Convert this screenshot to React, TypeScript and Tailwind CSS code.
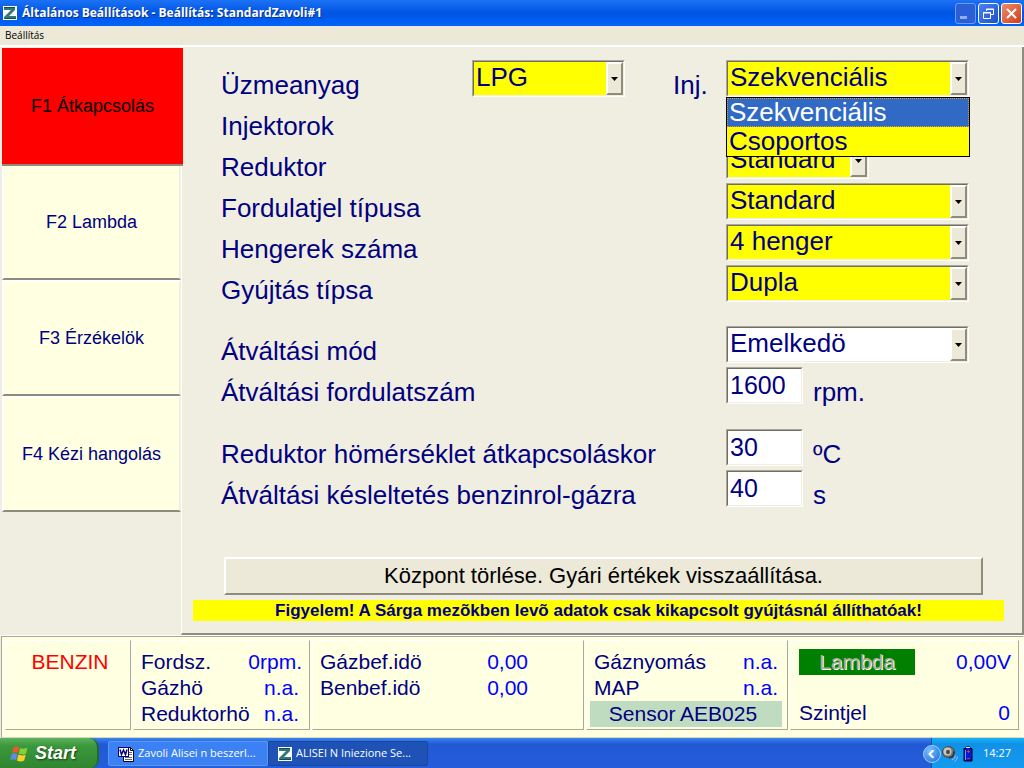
import { useState } from 'react'
import type { ReactNode } from 'react'
import clsx from 'clsx'

const tabs = ['F1 Átkapcsolás', 'F2 Lambda', 'F3 Érzékelök', 'F4 Kézi hangolás']

const sunken = 'border border-t-[#aca899] border-l-[#aca899] border-r-white border-b-white'
const sunkenInner = 'border border-t-[#716f64] border-l-[#716f64] border-r-[#f1efe2] border-b-[#f1efe2]'

function ZLogo() {
  return (
    <svg className="w-[14px] h-[14px] shrink-0" viewBox="0 0 14 14" aria-hidden="true">
      <rect width="14" height="14" fill="#fff" />
      <path d="M1 1h11v3L6 10h7v3H1v-2l7-7H1z" fill="#2f7a74" />
      <path d="M1 1.500h11M2 12.500h11" stroke="#1a4a48" fill="none" />
    </svg>
  )
}

function WindowsFlag() {
  return (
    <svg className="w-[19px] h-[18px] shrink-0" viewBox="0 0 19 18" aria-hidden="true">
      <path d="M3.500 2.500C5.500 1 7.500 1.200 9.200 2.200L7.700 8C6 7 4 7 2 8.200z" fill="#f2572a" />
      <path d="M10.200 2.900C12.500 4 14.500 4 17.500 2.500L16 8.500C13.500 9.900 11 9.600 8.700 8.600z" fill="#84cf3a" />
      <path d="M1.700 9.200C3.700 8 5.700 8 7.400 9L6 15C4 13.900 2 14 .2 15.200z" fill="#5b8df0" />
      <path d="M8.400 9.600C10.700 10.600 13 10.700 15.700 9.500L14.200 15.500C11.500 17 9 16.500 6.900 15.500z" fill="#fbd128" />
    </svg>
  )
}

function WordIcon() {
  return (
    <svg className="w-4 h-4 shrink-0" viewBox="0 0 16 16" aria-hidden="true">
      <path d="M5.500 1.500h7l3 3v11h-10z" fill="#fff" stroke="#000" />
      <path d="M12.500 1.500v3h3" fill="none" stroke="#000" />
      <path d="M11 6.500h3M11 8.500h3M7 11.500h7M7 13.500h7" stroke="#666" />
      <rect x=".5" y="1.500" width="10" height="9" fill="#fff" stroke="#000080" />
      <path d="M2 3.500l1.500 5 2-4.500 2 4.500 1.500-5" fill="none" stroke="#000080" strokeWidth="1.500" />
    </svg>
  )
}

function SpeakerIcon() {
  return (
    <svg className="w-4 h-4 shrink-0" viewBox="0 0 16 16" aria-hidden="true">
      <ellipse cx="6.500" cy="6" rx="6" ry="5.500" fill="#77756f" stroke="#4a4842" />
      <ellipse cx="5.500" cy="5.500" rx="4" ry="4" fill="#c9c7c0" />
      <ellipse cx="6" cy="6" rx="2" ry="2.300" fill="#4a4a4a" />
      <path d="M7 12l4-1.500 1-5" fill="none" stroke="#333" strokeWidth="1.500" />
      <path d="M10 14q3-1 3.500-4.500M12.500 15.500q2.500-1 3-5" fill="none" stroke="#a9b8ff" />
    </svg>
  )
}

function BatteryIcon() {
  return (
    <svg className="w-[10px] h-[16px] shrink-0" viewBox="0 0 10 16" aria-hidden="true">
      <path d="M3 1h4v1.500h2V15H1V2.500h2z" fill="#0018e0" stroke="#000" />
      <path d="M3 1.500h4" stroke="#e8e8e8" />
      <path d="M2.500 4v10" stroke="#4ca0ff" />
      <path d="M4 5.500h3M5.500 4v3M4 12.500h3" stroke="#f22" />
    </svg>
  )
}

function TitleBar() {
  const btn = 'flex items-center justify-center w-[21px] h-[21px] rounded-[3px] border'
  return (
    <header className="flex items-center h-[26px] pl-[3px] pr-[2px] bg-linear-to-b from-[#1c72f5] via-[#0054e3] to-[#0064fb]">
      <ZLogo />
      <h1 className="flex-1 ml-[5px] font-['Open_Sans','Noto_Sans',sans-serif] font-bold text-[12px] leading-[26px] text-white whitespace-nowrap [text-shadow:1px_1px_#0a2f8c]">
        Általános Beállítások - Beállítás: StandardZavoli#1
      </h1>
      <div className="flex gap-[2px]">
        <button aria-label="Kis méret" className={clsx(btn, 'border-[#6f9bf0] bg-[#2a5fd8]')}>
          <svg className="w-[13px] h-[13px]" viewBox="0 0 13 13"><path d="M1 9h7v3H1z" fill="#93aeee" /></svg>
        </button>
        <button aria-label="Előző méret" className={clsx(btn, 'border-white bg-linear-to-br from-[#4a82f0] to-[#1c4fc8]')}>
          <svg className="w-[13px] h-[13px]" viewBox="0 0 13 13" fill="none" stroke="#fff">
            <path d="M4.500 4V2.500h7v5H9M4 2h8M1.500 5.500h7v6h-7zM1 6h8" />
          </svg>
        </button>
        <button aria-label="Bezárás" className={clsx(btn, 'border-white bg-linear-to-br from-[#ee8a68] to-[#d03a12]')}>
          <svg className="w-[13px] h-[13px]" viewBox="0 0 13 13"><path d="M2 2l9 9M11 2l-9 9" stroke="#fff" strokeWidth="2" /></svg>
        </button>
      </div>
    </header>
  )
}

type ComboProps = {
  id: string
  value: string
  className: string
  white?: boolean
  children?: ReactNode
}

function Combo({ id, value, className, white, children }: ComboProps) {
  return (
    <div className={clsx('relative h-[37px]', sunken, className)}>
      <select
        id={id}
        defaultValue={value}
        className={clsx(
          'block appearance-none w-full h-full pl-[2px] pr-5 pb-[2px] leading-[31px] outline-none',
          sunkenInner,
          white ? 'bg-white' : 'bg-[#ffff00]'
        )}
      >
        <option>{value}</option>
      </select>
      <span className="absolute top-px right-px bottom-px w-[17px] flex items-center justify-center pointer-events-none bg-[#ece9d8] border-2 border-t-white border-l-white border-r-[#8f8c7e] border-b-[#8f8c7e]">
        <svg className="w-[7px] h-1 shrink-0" viewBox="0 0 7 4"><path d="M0 0h7L3.500 4z" fill="#000" /></svg>
      </span>
      {children}
    </div>
  )
}

function Row({ id, label, children }: { id?: string; label: string; children?: ReactNode }) {
  return (
    <div className="flex h-[41px]">
      <label htmlFor={id} className="w-[505px] shrink-0 pt-[10px] leading-[31px] whitespace-nowrap">
        {label}
      </label>
      {children}
    </div>
  )
}

function NumberRow({ id, label, value, unit }: { id: string; label: string; value: string; unit: string }) {
  return (
    <Row id={id} label={label}>
      <div className={clsx('w-[77px] h-[37px]', sunken)}>
        <input id={id} defaultValue={value} className={clsx('block w-full h-full pl-[2px] bg-white text-[25px] outline-none', sunkenInner)} />
      </div>
      <span className="ml-[10px] pt-[10px] leading-[31px]">{unit}</span>
    </Row>
  )
}

function SettingsForm() {
  return (
    <form className="pt-[13px] pl-[39px] text-[26px]" onSubmit={(e) => e.preventDefault()}>
      <div className="flex h-[41px]">
        <label htmlFor="fuel" className="w-[251px] shrink-0 pt-[10px] leading-[31px]">Üzmeanyag</label>
        <Combo id="fuel" value="LPG" className="w-[153px]" />
        <label htmlFor="inj" className="w-[101px] shrink-0 pl-12 pt-[10px] leading-[31px]">Inj.</label>
        <Combo id="inj" value="Szekvenciális" className="w-[243px]">
          <ul role="listbox" className="absolute z-10 top-9 -left-px w-[244px] border border-black bg-[#ffff00]">
            <li role="option" aria-selected="true" className="h-[29px] pl-px bg-[#316ac5] text-white border border-dotted border-[#e09a3a] leading-[27px]">
              Szekvenciális
            </li>
            <li role="option" aria-selected="false" className="h-[29px] pl-[2px] leading-[29px]">Csoportos</li>
          </ul>
        </Combo>
      </div>
      <Row label="Injektorok" />
      <Row id="reducer" label="Reduktor">
        <Combo id="reducer" value="Standard" className="w-[143px]" />
      </Row>
      <Row id="rpmtype" label="Fordulatjel típusa">
        <Combo id="rpmtype" value="Standard" className="w-[243px]" />
      </Row>
      <Row id="cylinders" label="Hengerek száma">
        <Combo id="cylinders" value="4 henger" className="w-[243px]" />
      </Row>
      <Row id="ignition" label="Gyújtás típsa">
        <Combo id="ignition" value="Dupla" className="w-[243px]" />
      </Row>
      <div className="mt-5">
        <Row id="mode" label="Átváltási mód">
          <Combo id="mode" value="Emelkedö" className="w-[243px]" white />
        </Row>
        <NumberRow id="rpm" label="Átváltási fordulatszám" value="1600" unit="rpm." />
      </div>
      <div className="mt-[21px]">
        <NumberRow id="temp" label="Reduktor hömérséklet átkapcsoláskor" value="30" unit="ºC" />
        <NumberRow id="delay" label="Átváltási késleltetés benzinrol-gázra" value="40" unit="s" />
      </div>
    </form>
  )
}

function StatusPanel({ className, children }: { className?: string; children: ReactNode }) {
  return (
    <section className={clsx('h-[90px] pt-2 border border-t-white border-l-white border-r-[#aca899] border-b-[#aca899]', className)}>
      {children}
    </section>
  )
}

function Reading({ label, value, className }: { label: string; value: string; className?: string }) {
  return (
    <div className="flex justify-between whitespace-nowrap">
      <span>{label}</span>
      <span className={clsx('text-[#0000ff]', className)}>{value}</span>
    </div>
  )
}

function StatusBar() {
  return (
    <footer className="border-t border-white pl-px">
      <div className="grid grid-cols-[126fr_177fr_272fr_202fr_229fr] gap-x-[2px] pl-[3px] pr-1 pt-[3px] pb-[7px] bg-[#ffffe1] border border-t-[#aca899] border-l-[#aca899] border-r-white border-b-[#d8d5c0] text-[21px] leading-[26px]">
        <StatusPanel className="text-center text-[#ff0000] pl-1">BENZIN</StatusPanel>
        <StatusPanel className="pl-[7px]">
          <Reading label="Fordsz." value="0rpm." className="pr-[7px]" />
          <Reading label="Gázhö" value="n.a." className="pr-[10px]" />
          <Reading label="Reduktorhö" value="n.a." className="pr-[10px]" />
        </StatusPanel>
        <StatusPanel className="pl-[7px] pr-[55px]">
          <Reading label="Gázbef.idö" value="0,00" />
          <Reading label="Benbef.idö" value="0,00" />
        </StatusPanel>
        <StatusPanel className="pl-[7px] pr-[9px]">
          <Reading label="Gáznyomás" value="n.a." />
          <Reading label="MAP" value="n.a." />
          <div className="-mx-1 pr-[6px] bg-[#c0dcc0] text-center">Sensor AEB025</div>
        </StatusPanel>
        <StatusPanel className="pl-2 pr-[7px]">
          <div className="flex justify-between mb-[25px]">
            <button disabled className="w-[116px] h-[26px] bg-[#008000] text-[#aca899] [text-shadow:1px_1px_#fff]">Lambda</button>
            <span className="text-[#0000ff]">0,00V</span>
          </div>
          <Reading label="Szintjel" value="0" className="pr-px" />
        </StatusPanel>
      </div>
    </footer>
  )
}

function Taskbar() {
  const task = "flex items-center gap-1 w-[160px] h-[25px] pl-[9px] rounded-[2px] text-[11px] text-white whitespace-nowrap font-['Open_Sans','Noto_Sans',sans-serif]"
  return (
    <nav className="flex items-center h-[31px] bg-linear-to-b from-[#3a86ee] from-0% via-[#2258d4] via-20% to-[#245edb]">
      <button className="flex items-center gap-[6px] w-[99px] h-full pl-[10px] rounded-r-[10px] bg-linear-to-b from-[#5cb45c] via-[#3c983c] via-25% to-[#2f852f] text-white italic font-bold text-[18px] [text-shadow:1px_1px_2px_#143c14] border-r-2 border-[#226a2a]">
        <WindowsFlag />
        Start
      </button>
      <div className="flex flex-1 ml-[9px]">
        <button className={clsx(task, 'bg-[#3c81f3] border border-[#5a98f8]')}>
          <WordIcon />
          Zavoli Alisei n beszerl...
        </button>
        <button className={clsx(task, 'bg-[#1e52b7] border border-[#1846a0]')}>
          <ZLogo />
          ALISEI N Iniezione Se...
        </button>
      </div>
      <div className="flex items-center h-full bg-linear-to-b from-[#18b4f4] via-[#1290e8] via-20% to-[#139bee] border-l border-[#0a5aa8] pr-[13px]">
        <button aria-label="Rejtett ikonok" className="-ml-[9px] flex items-center justify-center w-[18px] h-[18px] rounded-full bg-radial-[at_35%_30%] from-[#7cc0ff] to-[#1668d8] border border-[#9cd0ff]">
          <svg className="w-2 h-2" viewBox="0 0 8 8"><path d="M5.500 0l-4 4 4 4" fill="none" stroke="#fff" strokeWidth="2" /></svg>
        </button>
        <span className="flex items-center gap-[5px] ml-px">
          <SpeakerIcon />
          <BatteryIcon />
        </span>
        <time className="ml-[10px] text-[11px] text-white font-['Open_Sans','Noto_Sans',sans-serif]">14:27</time>
      </div>
    </nav>
  )
}

export default function App() {
  const [active, setActive] = useState(0)

  return (
    <div className="flex flex-col min-h-screen bg-[#f0eee1] text-[#000080] font-['Liberation_Sans',Arial,sans-serif]">
      <TitleBar />
      <div className="h-[19px] pl-[5px] bg-[#ece9d8]">
        <button className="block text-[10px] leading-[18px] text-black font-['Open_Sans','Noto_Sans',sans-serif]">Beállítás</button>
      </div>
      <div className="flex flex-1 border-t-2 border-white">
        <nav className="flex flex-col w-[181px] shrink-0 pt-px pl-[2px]">
          {tabs.map((tab, i) => (
            <button
              key={tab}
              onClick={() => setActive(i)}
              className={clsx(
                'text-[18px]',
                i === active
                  ? 'relative h-[118px] -mr-[2px] -mb-[2px] bg-[#ff0000] text-black border-b-2 border-[#8f8c7e]'
                  : 'h-[116px] bg-[#ffffe1] border-2 border-t-white border-l-white border-r-[#f0eee1] border-b-[#8f8c7e]'
              )}
            >
              {tab}
            </button>
          ))}
        </nav>
        <main className="flex-1 min-w-0 border-l border-l-white border-r-2 border-r-[#8f8c7e] border-b-2 border-b-[#8f8c7e]">
          <SettingsForm />
          <button className="block w-[calc(100%-81px)] h-[38px] mt-[46px] ml-[42px] bg-[#ece9d8] text-black text-[22px] leading-[30px] border-2 border-t-white border-l-white border-r-[#8f8c7e] border-b-[#8f8c7e]">
            Központ törlése. Gyári értékek visszaállítása.
          </button>
          <p className="mt-[5px] mb-3 ml-[11px] mr-[18px] bg-[#ffff00] text-center font-bold text-[17px] leading-[21px] whitespace-nowrap">
            Figyelem! A Sárga mezõkben levõ adatok csak kikapcsolt gyújtásnál állíthatóak!
          </p>
        </main>
      </div>
      <StatusBar />
      <Taskbar />
    </div>
  )
}
